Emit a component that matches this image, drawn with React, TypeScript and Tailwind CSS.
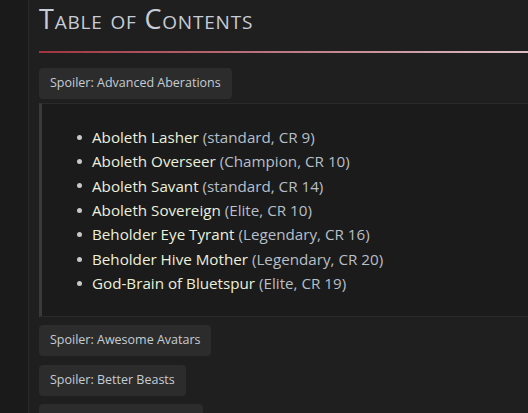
import React from "react";

const items: [string, string][] = [
  ["Aboleth Lasher", "(standard, CR 9)"],
  ["Aboleth Overseer", "(Champion, CR 10)"],
  ["Aboleth Savant", "(standard, CR 14)"],
  ["Aboleth Sovereign", "(Elite, CR 10)"],
  ["Beholder Eye Tyrant", "(Legendary, CR 16)"],
  ["Beholder Hive Mother", "(Legendary, CR 20)"],
  ["God-Brain of Bluetspur", "(Elite, CR 19)"],
];

function Spoiler({ label }: { label: string }) {
  return (
    <div className="flex shrink-0">
      <button className="h-[31px] shrink-0 rounded-[4px] bg-[#2c2c2c] px-[11px] text-[12.5px] text-[#c4ccd6] leading-none whitespace-nowrap">
        {label}
      </button>
    </div>
  );
}

export default function App() {
  return (
    <div
      className="flex h-[413px] w-[528px] overflow-hidden bg-[#1f1f1f]"
      style={{ fontFamily: '"Open Sans", "Noto Sans", sans-serif' }}
    >
      <div className="w-[29px] shrink-0 border-r border-[#2a2a2a] bg-[#1a1a1a]" />
      <div className="flex min-w-0 flex-1 flex-col pl-[10px]">
        <h1 className="mt-[1px] h-[36px] shrink-0 text-[27px] leading-[36px] tracking-[0.8px] text-[#c7cdd6] [font-variant:small-caps]">
          Table of Contents
        </h1>
        <div className="mt-[14px] h-[2px] w-full shrink-0 bg-[linear-gradient(to_right,#9e3440,#dcbec5)]" />
        <div className="mt-[15px] flex shrink-0 flex-col">
          <Spoiler label="Spoiler: Advanced Aberations" />
          <div className="mt-[4px] h-[214px] shrink-0 border-y border-l-[3px] border-y-[#2a2a2a] border-l-[#3a3a3a] bg-[#1b1b1b] pt-[21px]">
            <ul className="ml-[35px] flex flex-col">
              {items.map(([n, d]) => (
                <li key={n} className="flex h-[24.4px] shrink-0 items-center text-[15.2px] whitespace-nowrap">
                  <span className="mr-[10px] h-[5px] w-[5px] rounded-full bg-[#c8c8c8]" />
                  <span className="text-[#eaf0dc]">{n}</span>
                  <span className="ml-[4px] text-[#b7bfc8]">{d}</span>
                </li>
              ))}
            </ul>
          </div>
          <div className="mt-[8px] flex shrink-0 flex-col gap-[8.5px]">
            <Spoiler label="Spoiler: Awesome Avatars" />
            <Spoiler label="Spoiler: Better Beasts" />
            <Spoiler label="Spoiler: Cunning Casters" />
          </div>
        </div>
      </div>
    </div>
  );
}
